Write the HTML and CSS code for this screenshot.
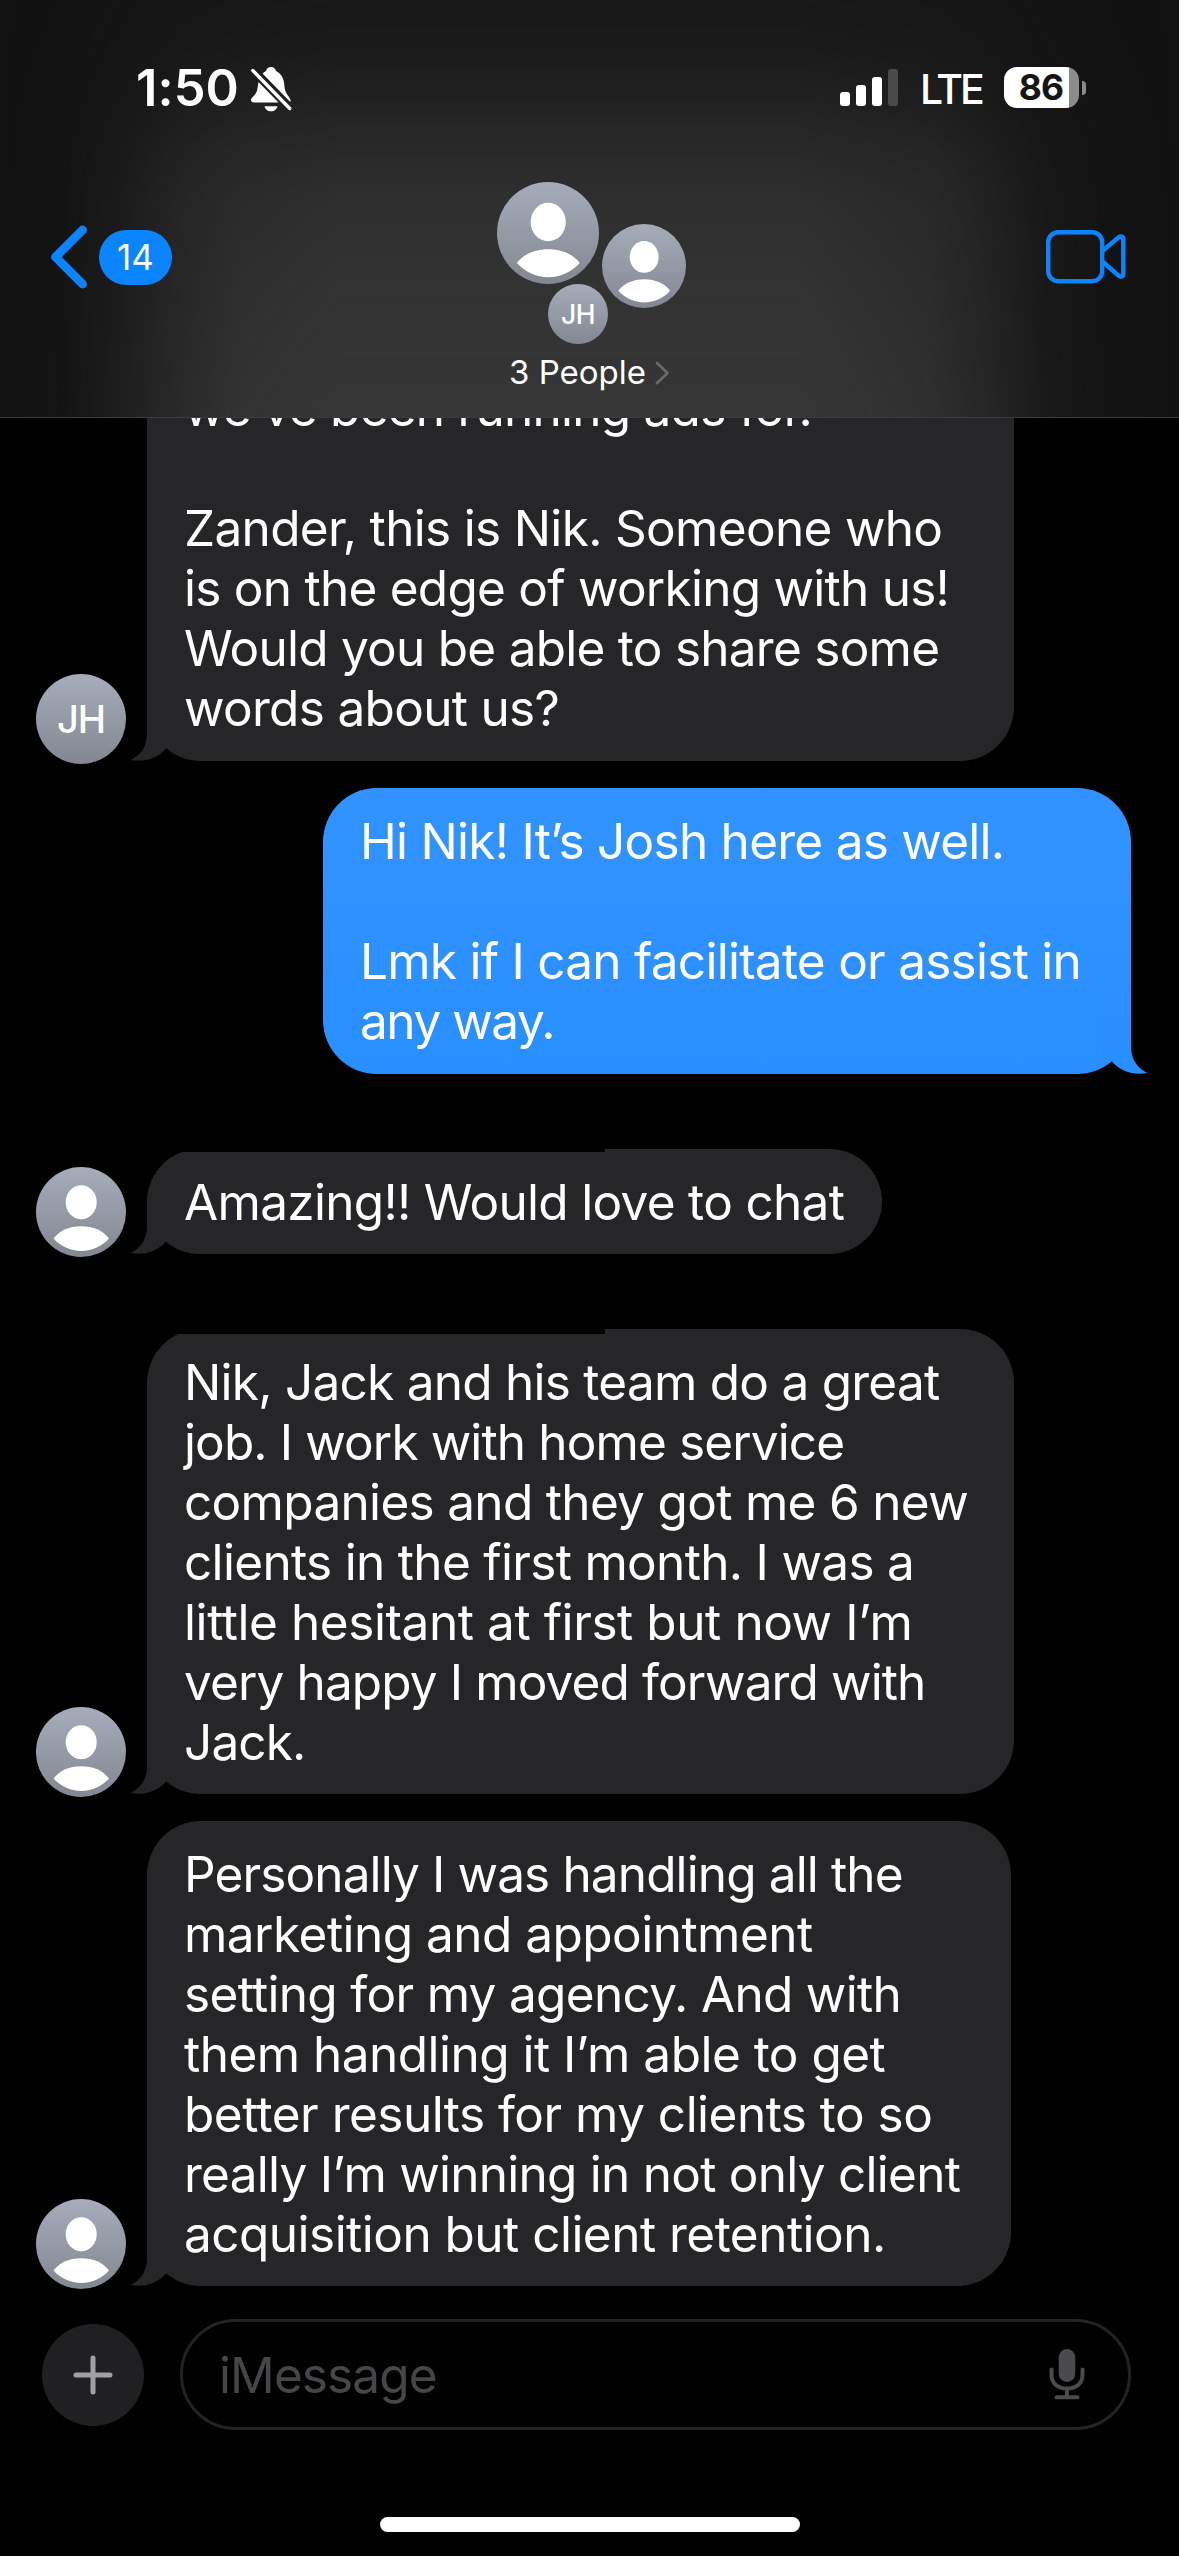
FILE: index.html
```html
<!DOCTYPE html>
<html lang="en">
<head>
<meta charset="utf-8">
<title>Messages</title>
<link rel="stylesheet" href="styles.css">
</head>
<body>
<svg class="defs" width="0" height="0" aria-hidden="true">
  <symbol id="person" viewBox="0 0 90 90">
    <ellipse cx="45.2" cy="35.3" rx="15.5" ry="17"/>
    <path d="M17.5 71.5C23.5 63.5 33.5 59.3 45.3 59.3S67 63.5 73 71.5C66.500 79 56 84 45.300 84S24 79 17.500 71.500Z"/>
  </symbol>
  <symbol id="tail" viewBox="0 0 48 56">
    <path d="M17 0V28C17 41 11 50 .5 55C14 57.500 27 54 36 43.500L46 30V0Z"/>
  </symbol>
</svg>
<div class="screen">
  <header class="header">
    <div class="status">
      <div class="status-left">
        <span class="time">1:50</span>
        <svg class="bell" width="42" height="46" viewBox="0 0 42 46">
          <g fill="#fff">
            <path d="M8.500 16L28.500 36.500H4.500C2 36.500 1 35.500 1 33.800C1 31 7 29 7.500 22Z"/>
            <path d="M12.500 7.500C14 6.200 15 5.600 16 5C16.700 2.500 18.500 1 21 1S25.300 2.500 26 5C31 7.500 34 12 34.300 19C34.700 28.500 40.500 31 40.500 34.500V36.200Z"/>
            <path d="M14.500 40.300H27.500C27 43.200 24.500 45.300 21 45.300S15 43.200 14.500 40.300Z"/>
          </g>
          <path d="M2.800 4.500L39.700 42.500" stroke="#fff" stroke-width="3.400" stroke-linecap="round"/>
        </svg>
      </div>
      <div class="status-right">
        <div class="signal"><i class="bar b1"></i><i class="bar b2"></i><i class="bar b3"></i><i class="bar b4"></i></div>
        <span class="network">LTE</span>
        <div class="battery"><span class="level">86</span></div>
        <i class="battery-cap"></i>
      </div>
    </div>
    <div class="nav">
      <div class="back">
        <svg width="38" height="64" viewBox="0 0 38 64" fill="none" stroke="#0b84ff" stroke-width="8.800" stroke-linecap="round" stroke-linejoin="round"><path d="M32.500 5L5.500 32L32.500 59"/></svg>
        <span class="badge">14</span>
      </div>
      <div class="group">
        <div class="cluster">
          <div class="avatar a1"><svg viewBox="0 0 90 90"><use href="#person"/></svg></div>
          <div class="avatar a2"><svg viewBox="0 0 90 90"><use href="#person"/></svg></div>
          <div class="avatar a3">JH</div>
        </div>
        <div class="title"><span>3 People</span>
          <svg width="15" height="24" viewBox="0 0 15 24" fill="none" stroke="#69696b" stroke-width="2.800" stroke-linecap="round" stroke-linejoin="round"><path d="M2 2L12.500 12L2 22"/></svg>
        </div>
      </div>
      <svg class="video" width="80" height="54" viewBox="0 0 80 54" fill="none" stroke="#0b84ff" stroke-width="4.400" stroke-linejoin="round"><rect x="2.200" y="2.200" width="54" height="49" rx="10"/><path d="M57 20.500L72.500 7.300Q77.300 5 77.300 9.500V43.500Q77.300 48 72.500 45.700L57 32"/></svg>
    </div>
  </header>

  <main class="thread">
    <div class="row first">
      <div class="avatar">JH</div>
      <div class="bubble in w1"><svg class="tail"><use href="#tail"/></svg><p class="t2">we’ve been running ads for.</p><p class="gap"></p><p class="t1">Zander, this is Nik. Someone who</p><p class="t2">is on the edge of working with us!</p><p class="t2">Would you be able to share some</p><p class="t1">words about us?</p></div>
    </div>
    <div class="row sent">
      <div class="bubble out"><svg class="tail"><use href="#tail"/></svg><p class="t2">Hi Nik! It’s Josh here as well.</p><p class="gap"></p><p class="t2">Lmk if I can facilitate or assist in</p><p class="t4">any way.</p></div>
    </div>
    <div class="row spaced">
      <div class="avatar"><svg viewBox="0 0 90 90"><use href="#person"/></svg></div>
      <div class="bubble in w2 notch"><svg class="tail"><use href="#tail"/></svg><p class="t1">Amazing!! Would love to chat</p></div>
    </div>
    <div class="row spaced">
      <div class="avatar"><svg viewBox="0 0 90 90"><use href="#person"/></svg></div>
      <div class="bubble in w1 notch deep"><svg class="tail"><use href="#tail"/></svg><p class="t2">Nik, Jack and his team do a great</p><p class="t3">job. I work with home service</p><p class="t1">companies and they got me 6 new</p><p class="t1">clients in the first month. I was a</p><p class="t0">little hesitant at first but now I’m</p><p class="t3">very happy I moved forward with</p><p class="t3">Jack.</p></div>
    </div>
    <div class="row">
      <div class="avatar"><svg viewBox="0 0 90 90"><use href="#person"/></svg></div>
      <div class="bubble in w3"><svg class="tail"><use href="#tail"/></svg><p class="t3">Personally I was handling all the</p><p>marketing and appointment</p><p class="t1">setting for my agency. And with</p><p>them handling it I’m able to get</p><p>better results for my clients to so</p><p class="t2">really I’m winning in not only client</p><p>acquisition but client retention.</p></div>
    </div>
  </main>

  <footer class="composer">
    <div class="plus"><svg width="40" height="40" viewBox="0 0 40 40" stroke="#a1a1a4" stroke-width="5" stroke-linecap="round"><path d="M20 3V37M3 20H37"/></svg></div>
    <div class="field">
      <span>iMessage</span>
      <svg width="36" height="51" viewBox="0 0 36 51" fill="none" stroke="#4b4b4d" stroke-width="4" stroke-linecap="round"><rect x="9.700" y="0" width="16.600" height="33" rx="8.300" fill="#4b4b4d" stroke="none"/><path d="M2.500 20.500V26C2.500 34.500 9 39.500 18 39.500S33.500 34.500 33.500 26V20.500M18 40V48M7.500 48.300H28.500"/></svg>
    </div>
  </footer>
  <div class="home"></div>
</div>
</body>
</html>
```
FILE: styles.css
```css
* { box-sizing: border-box; margin: 0; padding: 0; }
body { background: #000; }
.defs { display: block; height: 0; }
.screen {
  width: 1179px; height: 2556px; overflow: hidden; background: #000; color: #fff;
  font-family: Inter, "Liberation Sans", sans-serif;
  display: flex; flex-direction: column;
}

/* header */
.header {
  position: relative; height: 418px; flex: none; background: #121212;
  border-bottom: 1px solid #3c3c3e; isolation: isolate;
}
.header::before {
  content: ""; position: absolute; inset: 0; z-index: -1; background: #373738;
  mask-image: linear-gradient(90deg, transparent 0, rgba(0,0,0,.06) 60px, rgba(0,0,0,.32) 120px, rgba(0,0,0,.68) 185px, rgba(0,0,0,.88) 240px, #000 340px, #000 800px, rgba(0,0,0,.8) 930px, rgba(0,0,0,.55) 985px, rgba(0,0,0,.22) 1045px, rgba(0,0,0,.05) 1110px, transparent 1179px),
    linear-gradient(180deg, rgba(0,0,0,.16) 0, rgba(0,0,0,.25) 50px, rgba(0,0,0,.42) 100px, rgba(0,0,0,.63) 150px, rgba(0,0,0,.78) 200px, rgba(0,0,0,.88) 280px, #000 417px);
  mask-composite: intersect;
}
.status { height: 182px; display: flex; justify-content: space-between; padding: 58px 93px 0 136px; }
.status-left, .status-right { display: flex; align-items: flex-start; }
.time { font-size: 50.500px; line-height: 60px; font-weight: 600; width: 114px; letter-spacing: .1px; white-space: nowrap; }
.bell { margin-top: 8px; }
.signal { display: flex; gap: 6px; height: 48px; align-items: flex-end; width: 58px; }
.bar { width: 10px; border-radius: 3px; background: #fff; }
.b1 { height: 14px; } .b2 { height: 21px; } .b3 { height: 29px; } .b4 { height: 37px; background: #4a4a4a; }
.network { margin-left: 22px; width: 84px; font-size: 41px; line-height: 50px; font-weight: 500; padding-top: 6px; letter-spacing: -3px; white-space: nowrap; }
.battery {
  margin-top: 9px; width: 75px; height: 41px; border-radius: 13px; padding-right: 1px;
  background: linear-gradient(90deg, #fff 65px, #8c8c8c 65px); display: flex; justify-content: center; align-items: center;
}
.level { color: #151515; font-weight: 700; font-size: 35.500px; line-height: 41px; letter-spacing: -.8px; }
.battery-cap { width: 4px; height: 14px; margin: 23px 0 0 3px; border-radius: 0 4px 4px 0; background: #8c8c8c; }
.nav { display: flex; padding: 0 53px 0 50px; }
.back { display: flex; align-items: center; gap: 11px; height: 64px; margin-top: 43px; width: 447px; flex: none; }
.badge { width: 73px; height: 55px; border-radius: 27.500px; background: #0b84ff; font-size: 35px; line-height: 55px; text-align: center; }
.group { width: 190px; margin-right: auto; }
.cluster { position: relative; height: 162px; }
.avatar {
  border-radius: 50%; background: linear-gradient(#a6acba, #838791); width: 90px; height: 90px; flex: none;
  display: flex; align-items: center; justify-content: center; font-size: 38px; font-weight: 500; letter-spacing: -1px;
}
.avatar svg { width: 100%; height: 100%; fill: #fff; }
.cluster .avatar { position: absolute; }
.cluster .a1 { left: 0; top: 0; width: 102px; height: 102px; }
.cluster .a2 { left: 105px; top: 42px; width: 84px; height: 84px; }
.cluster .a3 { left: 51px; top: 102px; width: 60px; height: 60px; font-size: 26.500px; letter-spacing: -.5px; }
.title { display: flex; align-items: center; gap: 11px; padding-left: 12px; margin-top: 6px; font-size: 33px; line-height: 44px; }
.title span { white-space: nowrap; width: 135px; }
.title svg { flex: none; position: relative; top: 1px; }
.video { margin-top: 48px; }

/* messages */
.thread { height: 1889px; flex: none; overflow: hidden; padding: 0 48px 0 36px; }
.row { display: flex; align-items: flex-end; gap: 21px; margin-top: 27px; }
.row.first { margin-top: -63px; }
.row.sent { justify-content: flex-end; }
.row.spaced { margin-top: 75px; }
.row .avatar { position: relative; top: 3px; }
.bubble { position: relative; border-radius: 54px; padding: 23px 36px 22px 37px; font-size: 49.500px; line-height: 60px; }
.bubble p { height: 60px; white-space: nowrap; letter-spacing: -.52px; }
.bubble .t0 { letter-spacing: -.42px; }
.bubble .t1 { letter-spacing: -.68px; }
.bubble .t2 { letter-spacing: -.74px; }
.bubble .t3 { letter-spacing: -.87px; }
.bubble .t4 { letter-spacing: -1.450px; }
.in { background: #262628; fill: #262628; }
.out { width: 808px; background: linear-gradient(#3193ff, #298fff); fill: #298fff; }
.first .bubble, .out { padding-bottom: 23px; }
.w1 { width: 867px; } .w2 { width: 735px; } .w3 { width: 864px; }
.tail { position: absolute; left: -17px; bottom: 0; width: 48px; height: 56px; }
.out .tail { left: auto; right: -17px; transform: scaleX(-1); }
.notch::before { content: ""; position: absolute; left: 0; top: 0; width: 458px; height: 3px; background: #000; }
.deep::before { height: 5px; }

/* composer */
.composer { display: flex; align-items: center; gap: 36px; padding: 0 48px 0 42px; height: 111px; margin-top: 12px; flex: none; }
.plus { width: 102px; height: 102px; border-radius: 50%; background: #202022; display: flex; align-items: center; justify-content: center; }
.field {
  flex: 1; height: 111px; border: 3px solid #232324; border-radius: 56px; padding: 0 43px 0 36px;
  display: flex; align-items: center; justify-content: space-between; font-size: 49.500px; color: #464648; letter-spacing: -.9px;
}
.home { width: 420px; height: 15px; border-radius: 8px; background: #fff; margin: 87px 0 0 380px; flex: none; }
```
